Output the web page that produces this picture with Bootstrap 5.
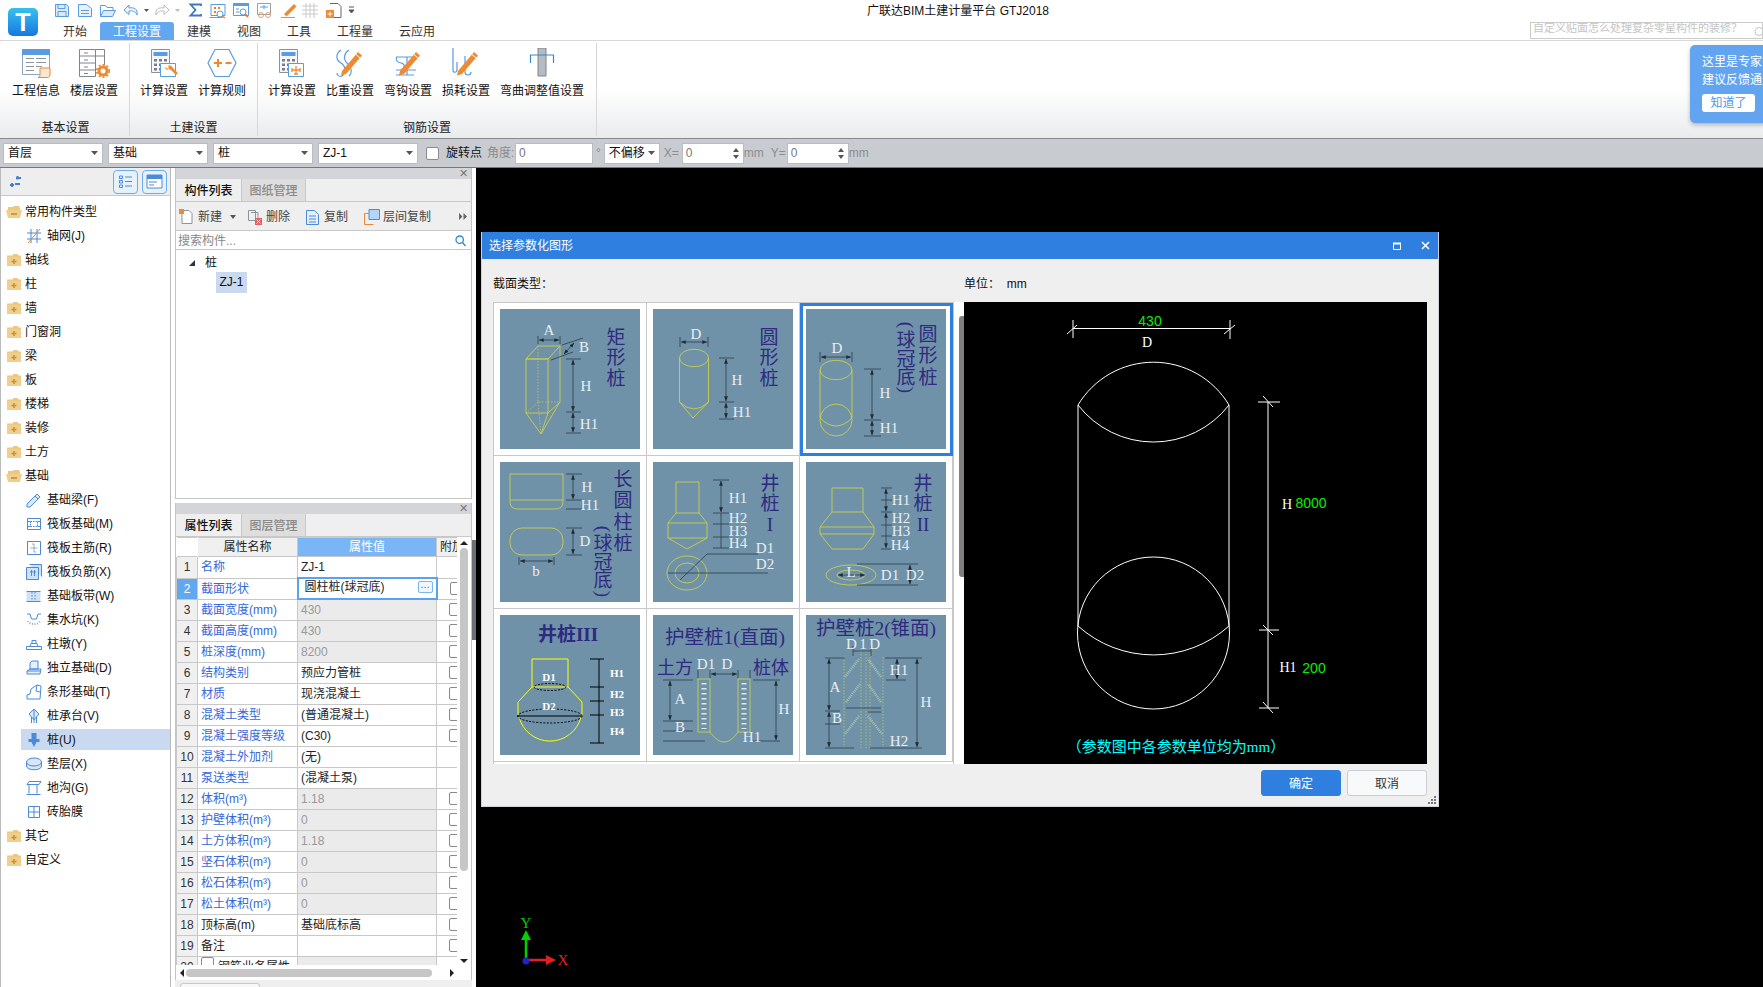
<!DOCTYPE html>
<html lang="zh-CN">
<head>
<meta charset="UTF-8">
<title>广联达BIM土建计量平台 GTJ2018</title>
<link href="https://cdn.jsdelivr.net/npm/bootstrap@5.3.0/dist/css/bootstrap.min.css" rel="stylesheet">
<style>
html, body { height: 100%; overflow: hidden; }
body { font-family: "Liberation Sans", "Noto Sans CJK SC", sans-serif; font-size: 12px; color: #111; background: #fff; line-height: 16px; }
button, input, select { font-family: inherit; }

/* top bar */
.gt-top { height: 41px; border-bottom: 1px solid #d9d9d9; }
.gt-logo { width: 45px; height: 40px; padding: 8px 0 0 8px; flex: none; }
.gt-quick { height: 22px; padding-left: 5px; }
.gt-title { margin-left: 507px; margin-top: -1px; }
.gt-tabs { padding-left: 5px; }
.gt-tab { height: 18px; line-height: 20px; padding: 0 13px; color: #333; }
.gt-tab-on { background: #63a8ee; color: #fff; border-radius: 3px 3px 0 0; }
.gt-ask { width: 233px; height: 17px; border: 1px solid #ccc; color: #c4c4c4; font-size: 11px; line-height: 11px; padding-left: 2px; overflow: hidden; white-space: nowrap; }
.gt-ask svg { right: 0; top: 4px; }
.gt-tip { top: 45px; left: 1690px; width: 123px; height: 78px; background: #62a4ef; color: #fff; border-radius: 5px; padding: 8px 12px; line-height: 18px; white-space: nowrap; box-shadow: 0 2px 4px rgba(0,0,0,.25); }
.gt-tip-btn { width: 53px; height: 18px; padding: 0; border: 0; border-radius: 3px; background: #fff; color: #4d97ea; font-size: 12px; line-height: 18px; margin-top: 5px; display: block; }

/* ribbon */
.gt-ribbon { height: 98px; border-bottom: 1px solid #8a8a8a; background: linear-gradient(#fff 0, #fff 50%, #e9ebed 100%); }
.gt-group { border-right: 1px solid #d8d8d8; margin-top: 2px; margin-bottom: 2px; padding: 5px 10px 0; }
.gt-group-a { width: 130px; padding-left: 12px; }
.gt-group-b { width: 128px; }
.gt-group-c { width: 339px; }
.gt-rrow { gap: 10px; }
.gt-rbtn { text-align: center; white-space: nowrap; }
.gt-rbtn svg { display: block; margin: 0 auto 5px; }
.gt-gname { text-align: center; margin-top: auto; color: #222; }

/* toolbar */
.gt-bar { height: 29px; background: #c8cbcf; border-bottom: 1px solid #777; padding-left: 3px; color: #8b8d90; }
.gt-sel.form-select { width: 100px; height: 21px; padding: 0 14px 0 4px; border: 1px solid #b9bcc0; border-radius: 0; font-size: 12px; line-height: 19px; color: #111; background-position: right 4px center; background-size: 7px 4px;
  background-image: url("data:image/svg+xml,%3csvg xmlns='http://www.w3.org/2000/svg' viewBox='0 0 7 4'%3e%3cpath d='M0 0h7L3.5 4z' fill='%23555'/%3e%3c/svg%3e"); }
.gt-sel-n { margin-left: 5px; }
.gt-sel-s.form-select { width: 56px; margin-left: 3px; }
.gt-check.form-check-input { width: 13px; height: 13px; margin: 0; border: 1px solid #8a8a8a; border-radius: 2px; flex: none; }
.gt-field.form-control { height: 21px; padding: 0 3px; border: 1px solid #b9bcc0; border-radius: 0; font-size: 12px; color: #777; }
.gt-w78 { width: 78px !important; }
.gt-spin { width: 62px; }
.gt-spin svg { right: 5px; top: 5px; }
.gt-lbl-on { color: #111; margin-left: 7px; width: 36px; }
.gt-lbl-a { margin-left: 5px; width: 28px; }
.gt-deg { margin-left: 3px; }
.gt-lbl-x { margin-left: 4px; width: 18px; }
.gt-lbl-y { margin-left: 5px; width: 16px; }
.gt-unit { width: 22px; }

/* workspace */
.gt-work { height: 819px; }
.gt-left { width: 171px; border-left: 1px solid #bbb; border-right: 1px solid #bbb; flex: none; }
.gt-lhead { height: 28px; background: #eee; border-bottom: 1px solid #c8c8c8; padding-right: 3px; }
.gt-lbtn { width: 25px; height: 24px; padding: 0; border: 1px solid #66aef0; border-radius: 4px; background: #e5f1fb; display: flex; align-items: center; justify-content: center; }
.gt-tree { padding-top: 4px; }
.gt-node { height: 24px; white-space: nowrap; }
.gt-node-p { padding-left: 5px; gap: 3px; }
.gt-node-c { margin-left: 20px; padding-left: 5px; gap: 5px; }
.gt-node-on { background: #c8d9f0; background-clip: padding-box; border-top: 1px solid #fff; border-bottom: 2px solid #fff; }

.gt-mid { width: 297px; margin-left: 4px; flex: none; }
.gt-pane { border: 1px solid #c4c4c4; border-top: 0; }
.gt-pane-a { height: 331px; }
.gt-pane-b { height: 477px; margin-top: 4px; background: #efefef; }
.gt-cap { height: 11px; background: #d4d5d9; color: #777; font-size: 11px; line-height: 11px; text-align: right; padding-right: 3px; }
.gt-ptabs { height: 23px; background: #efefef; border-bottom: 1px solid #c8c8c8; }
.gt-ptab { width: 65px; text-align: center; line-height: 24px; font-weight: 500; }
.gt-ptab-off { background: #dedede; color: #8a8a8a; border-left: 1px solid #c8c8c8; border-right: 1px solid #c8c8c8; }
.gt-ptool { height: 29px; background: #efefef; border-bottom: 1px solid #c8c8c8; color: #444; padding: 1px 0 0 3px; white-space: nowrap; }
.gt-m3 { margin-left: 3px; }
.gt-m5 { margin-left: 5px; }
.gt-m11 { margin-left: 11px; }
.gt-find { height: 19px; border-bottom: 1px solid #c8c8c8; padding: 2px 5px 0 2px; color: #888; background: #fff; }
.gt-ctree { padding-top: 4px; background: #fff; }
.gt-tw { padding: 0 0 0 13px; height: 17px; gap: 6px; }
.gt-zj { margin-left: 40px; width: 31px; height: 21px; line-height: 21px; text-align: center; background: #c8d9f0; margin-top: 1px; }

.gt-tblbox { height: 428px; background: #fff; }
.gt-tblclip { width: 281px; overflow: hidden; }
.gt-prop.table { --bs-table-border-color: #c8c8c8; table-layout: fixed; width: 281px; font-size: 12px; margin: 0; }
.gt-prop.table > :not(caption) > * > * { padding: 0 3px; height: 21px; line-height: 20px; white-space: nowrap; overflow: hidden; box-shadow: none; background: transparent; color: inherit; }
.gt-prop th { font-weight: 400; text-align: center; }
.gt-prop.table thead > tr > th { background: #f0f0f0; height: 18px; line-height: 18px; }
.gt-prop.table thead > tr > th:first-child { background: #fff; border-color: #fff; }
.gt-prop.table thead > tr > th.gt-hval { background: #7ab6f5; color: #fff; }
.gt-prop.table tbody > tr > td.gt-no { background: #f0f0f0; text-align: center; padding: 0; color: #333; }
.gt-prop.table tbody > tr > td.gt-no-on { background: #62a8f0; color: #fff; }
.gt-prop.table tbody > tr > td.gt-name { color: #3568d8; }
.gt-prop.table tbody > tr > td.gt-name-k { color: #222; }
.gt-prop.table tbody > tr > td.gt-off { background: #ebebeb; color: #999; }
.gt-prop.table tbody > tr > td.gt-edit { border: 2px solid #5aa2ee; padding: 0 3px 0 6px; line-height: 16px; }
.gt-edit-in { height: 16px; }
.gt-prop.table tbody > tr > td.gt-ck { padding: 3px 0 0 12px; line-height: 0; }
.gt-more { width: 15px; height: 12px; border: 1px solid #7ab6f5; border-radius: 2px; background: #eef6fe; color: #3c87da; line-height: 5px; font-size: 11px; text-align: center; }
.gt-vbar { width: 14px; background: #fff; }
.gt-vthumb { width: 8px; height: 323px; margin: 3px auto 0; background: #c6c6c6; border-radius: 4px; }
.gt-vdown { margin-top: 88px; }
.gt-hbar { height: 15px; background: #fff; padding: 0 17px 0 4px; gap: 2px; }
.gt-hthumb { width: 246px; height: 8px; background: #c6c6c6; border-radius: 4px; margin-right: auto; }
.gt-foot { height: 7px; padding: 3px 0 0 5px; background: #efefef; }
.gt-foot div { width: 80px; height: 8px; border: 1px solid #c8c8c8; border-radius: 3px 3px 0 0; background: #f8f8f8; }

.gt-canvas { background: #000; }
.gt-split { width: 4px; background: #fff; flex: none; }
.gt-handle { height: 100px; margin-top: 372px; background: #6b7075; }
.gt-axis { left: 34px; top: 747px; }

/* dialog */
.gt-dlg { left: 5px; top: 64px; width: 958px; height: 575px; background: #efefef; border: 1px solid #cfd3d8; border-top: 0; }
.gt-dtitle { height: 27px; background: #2e7fe0; color: #fff; padding: 0 8px 0 7px; gap: 20px; }
.gt-dhead { height: 43px; padding: 17px 0 0 11px; }
.gt-dhead-u { margin-left: 411px; }
.gt-dmain { height: 462px; padding: 0 11px; }
.gt-grid { width: 460px; height: 462px; overflow: hidden; border: solid #c8c8c8; border-width: 1px 0 0 1px; display: grid; grid-template-columns: repeat(3, 153px); grid-auto-rows: 153px; background: #fff; flex: none; }
.gt-cell { padding: 6px 6px 5px; border: solid #c8c8c8; border-width: 0 1px 1px 0; }
.gt-cell-on { outline: 3px solid #2e7fe0; outline-offset: -3px; }
.gt-cell svg { display: block; background: #6f92a9; }
.gt-dbar { width: 11px; background: #fff; border-left: 1px solid #c8c8c8; padding: 14px 0 0 5px; }
.gt-dthumb { width: 6px; height: 261px; background: #7f7f7f; border-radius: 3px 0 0 3px; }
.gt-view { background: #000; }
.gt-dfoot { padding: 6px 11px 0 0; gap: 6px; }
.gt-ok.btn, .gt-no-btn.btn { width: 80px; height: 26px; padding: 1px 0 0; font-size: 12px; border-radius: 3px; }
.gt-ok.btn { background: #2e7fe0; border-color: #2e7fe0; }
.gt-no-btn.btn { background: #f8f9fa; border-color: #c8ced5; color: #333; }
.gt-grip { right: 1px; bottom: 1px; }

/* svg text */
svg text { font-family: "Liberation Serif", "Noto Sans CJK SC", serif; text-anchor: middle; dominant-baseline: central; }
.gt-y { fill: none; stroke: #c9cf4a; stroke-width: .9; }
.gt-yy { fill: none; stroke: #ffff00; stroke-width: 1; }
.gt-yd { fill: none; stroke: #c9cf4a; stroke-width: .7; stroke-dasharray: 1.5 1.5; }
.gt-d { fill: none; stroke: #2d3c48; stroke-width: .8; }
.gt-a { fill: none; stroke: #2d3c48; stroke-width: .8; marker-start: url(#gt-ar); marker-end: url(#gt-ar); }
.gt-t { fill: #e9eef2; font-size: 15px; }
.gt-tb { fill: #fff; font-size: 11px; font-weight: 700; }
.gt-p { fill: #2e2a80; font-size: 19px; }
.gt-pb { fill: #2e2a80; font-size: 19px; font-weight: 700; }
.gt-ps { fill: #2e2a80; font-size: 18px; }
.gt-pt { fill: #2e2a80; font-size: 19.5px; }
.gt-vl { fill: none; stroke: #fff; stroke-width: 1; }
.gt-vg { fill: #00f000; font-family: "Liberation Sans", sans-serif; font-size: 14px; }
.gt-vw { fill: #fff; font-size: 14px; }
.gt-vc { fill: #00ffff; font-size: 15px; }
.gt-cap-t { fill: none; stroke: #a9c4b4; stroke-width: 2.5; stroke-dasharray: 1 1; }
</style>
</head>
<body>
<svg width="0" height="0" class="position-absolute">
  <defs>
    <marker id="gt-ar" viewBox="0 0 8 6" refX="7.5" refY="3" markerWidth="5" markerHeight="4" markerUnits="userSpaceOnUse" orient="auto-start-reverse"><path d="M0 0L8 3L0 6z" fill="#1e2a33"/></marker>
    <symbol id="gt-fold" viewBox="0 0 16 14"><path d="M1 4V2.500h5.500l1-1.500h4l1 1.500H15V13H1z" fill="#ecc77e"/><path d="M1 4h14v9H1z" fill="#f0cf8e"/><path d="M8 6v5M5.500 8.500h5" stroke="#c4923a" stroke-width="1.600"/></symbol>
    <symbol id="gt-open" viewBox="0 0 16 14"><path d="M2 3V2h5l1-1h5l1 2v3H2z" fill="#ecc77e"/><path d="M0 5h16l-2 8H2z" fill="#f0cf8e"/><path d="M5 9h6" stroke="#c4923a" stroke-width="1.600"/></symbol>
    <symbol id="gt-pen" viewBox="0 0 30 30"><path d="M7 23L23 4l4 3.500L11 26l-5 1.500z" fill="#ee8a32"/><path d="M21 6.500l4 3.500" stroke="#fff"/></symbol>
    <symbol id="gt-calc" viewBox="0 0 30 30"><path d="M2.500 1.500h18v23h-18z" fill="#f4f6f8" stroke="#8c9298"/><path d="M4.500 4h14v4h-14z" fill="#5b9be0"/><path d="M5 11h3v2.500H5zM10 11h3v2.500h-3zM15 11h3v2.500h-3zM5 15.500h3V18H5zM10 15.500h3V18h-3zM5 20h3v2.500H5zM10 20h3v2.500h-3z" fill="#787e85"/><path d="M11.500 15.500h15v13h-15z" fill="#fff" stroke="#5b9be0"/></symbol>
  </defs>
</svg>

<div class="gt-top d-flex">
  <div class="gt-logo">
    <svg width="30" height="28" viewBox="0 0 30 28"><defs><linearGradient id="gt-lg" x1="0" y1="0" x2="0" y2="1"><stop offset="0" stop-color="#36c0ee"/><stop offset="1" stop-color="#1878e0"/></linearGradient></defs><rect width="30" height="28" rx="5" fill="url(#gt-lg)"/><text x="15" y="14" fill="#fff" font-size="25" font-weight="700" style="font-family:'Liberation Sans',sans-serif">T</text></svg>
  </div>
  <div class="flex-grow-1 d-flex flex-column">
    <div class="gt-quick d-flex align-items-center">
      <svg class="flex-shrink-0" width="310" height="18" viewBox="50 2 310 18" fill="none" stroke="#5b9be0" stroke-width="1">
        <path d="M55.500 4.500h11l2 2v10h-13z" fill="#d9e9fa"/><path d="M58 4.500v4h7v-4M58 16.500v-5h8v5"/>
        <path d="M78.500 4.500h8l5 4v8h-13z" fill="#e9f2fc"/><path d="M81 10.500h8M81 13.500h8"/>
        <path d="M100.500 16.500v-11h5l1.500 2h6v3" /><path d="M100.500 16.500l3-6h12l-3 6z" fill="#d9e9fa"/>
        <path d="M137 15c1-6-3-8-8-7v-3l-5 5 5 4.500V11c3-.5 6 0 8 4z" fill="#eef5fc"/>
        <path d="M144 9h5l-2.500 3z" fill="#555" stroke="none"/>
        <path d="M156 15c-1-6 3-8 8-7V5l5 5-5 4.500V11c-3-.5-6 0-8 4z" stroke="#b9bcc0"/>
        <path d="M175 9h5l-2.500 3z" fill="#b9bcc0" stroke="none"/>
        <path d="M201 6V4.500h-10.500l5 5.500-5 5.500H201V14" stroke="#3e78bb" stroke-width="1.800"/>
        <path d="M211 4.500h14v11h-14z M209.500 17.500h13" /><path d="M214 7h2v2h-2zM218 7h2v2h-2zM214 11h2v2h-2z" fill="#e67d2a" stroke="none"/><circle cx="220" cy="14" r="3" fill="#fff"/><path d="M222 16l3 2" stroke="#e67d2a" stroke-width="1.500"/>
        <path d="M233.500 3.500h15v12h-15z"/><path d="M233.500 3.500h15v2h-15z" fill="#5b9be0"/><circle cx="243" cy="12" r="3" fill="#fff"/><path d="M245 14l3 3" stroke="#e67d2a" stroke-width="1.800"/><path d="M236 9h3M236 12h3" />
        <path d="M257.500 3.500h13v11h-13z" stroke="#9aa0a6"/><path d="M260 7h8M264 5v4" stroke="#5b9be0"/><circle cx="261" cy="15" r="2.500" stroke="#e6a06a"/><circle cx="268" cy="15" r="2.500" stroke="#e6a06a"/>
        <path d="M284 14l10-10 2.500 2.500-10 10z" fill="#ee8a32" stroke="none"/><path d="M281 17.500h14" stroke="#9aa0a6"/>
        <path d="M302 6h16M302 10h16M302 14h16M306 3v15M310 3v15M314 3v15" stroke="#c9c9c9"/>
        <path d="M330 3.500h8l3 3v11h-11" stroke="#5f6a75"/><path d="M326 10h8v8h-8z" fill="#ee8a32" stroke="none"/><path d="M330 11.500v5M327.500 14h5" stroke="#fff"/>
        <path d="M349 7h5M349 10h5l-2.500 3z" fill="#555" stroke="#555"/>
      </svg>
      <span class="gt-title">广联达BIM土建计量平台 GTJ2018</span>
    </div>
    <div class="d-flex gt-tabs">
      <div class="gt-tab">开始</div>
      <div class="gt-tab gt-tab-on">工程设置</div>
      <div class="gt-tab">建模</div>
      <div class="gt-tab">视图</div>
      <div class="gt-tab">工具</div>
      <div class="gt-tab">工程量</div>
      <div class="gt-tab">云应用</div>
      <div class="gt-ask ms-auto position-relative">自定义贴面怎么处理复杂零星构件的装修？
        <svg class="position-absolute" width="8" height="9" viewBox="0 0 8 9"><circle cx="5" cy="4.500" r="4" fill="none" stroke="#c4c4c4"/></svg>
      </div>
    </div>
  </div>
</div>

<div class="gt-ribbon d-flex">
  <div class="gt-group gt-group-a d-flex flex-column">
    <div class="d-flex gt-rrow">
      <div class="gt-rbtn">
        <svg width="30" height="30" viewBox="0 0 30 30"><path d="M1.500 1.500h27v25h-27z" fill="#fff" stroke="#8ea3b8"/><path d="M1 1h28v6H1z" fill="#5b9be0"/><path d="M5 10.500h8M5 14.500h8M5 18.500h8M5 22.500h8M15 10.500h10M15 14.500h10M15 18.500h6" stroke="#8c949c"/><path d="M19 20h10v7c0 2-2 2.500-3 2.500h-9c2-.5 2-2 2-3z" fill="#fbe6d0" stroke="#e58a3c"/></svg>
        工程信息
      </div>
      <div class="gt-rbtn">
        <svg width="32" height="30" viewBox="0 0 32 30"><path d="M1.500 1.500h16v27h-16z" fill="#fff" stroke="#7f868d"/><path d="M17.500 1.500h9v16M17.500 8h9" fill="none" stroke="#7f868d"/><path d="M1.500 8h16M1.500 15h16M1.500 22h16M6 5h4M6 12h4M6 19h4M6 25.500h4" stroke="#7f868d"/><circle cx="25" cy="23" r="4" fill="none" stroke="#ee8a32" stroke-width="3"/><circle cx="25" cy="23" r="6.200" fill="none" stroke="#ee8a32" stroke-width="1.800" stroke-dasharray="2 2"/></svg>
        楼层设置
      </div>
    </div>
    <div class="gt-gname">基本设置</div>
  </div>
  <div class="gt-group gt-group-b d-flex flex-column">
    <div class="d-flex gt-rrow">
      <div class="gt-rbtn">
        <svg width="30" height="30" viewBox="0 0 30 30"><use href="#gt-calc"/><path d="M15 19l3 3 2-2-1-2c2-1 4 0 5 2l5 5-2 2-5-5" fill="#ee8a32"/></svg>
        计算设置
      </div>
      <div class="gt-rbtn">
        <svg width="30" height="30" viewBox="0 0 30 30"><path d="M8 1.500h14L29 15l-7 13.500H8L1 15z" fill="#fff" stroke="#5b9be0" stroke-width="1.200"/><path d="M7 15h8M11 11v8M18.500 15h6" stroke="#ee8a32" stroke-width="2"/></svg>
        计算规则
      </div>
    </div>
    <div class="gt-gname">土建设置</div>
  </div>
  <div class="gt-group gt-group-c d-flex flex-column">
    <div class="d-flex gt-rrow">
      <div class="gt-rbtn">
        <svg width="30" height="30" viewBox="0 0 30 30"><use href="#gt-calc"/><path d="M19 18v8M15 22h8M15 20v4M23 20v4M17 26h4" stroke="#ee8a32" stroke-width="1.300" fill="none"/></svg>
        计算设置
      </div>
      <div class="gt-rbtn">
        <svg width="30" height="30" viewBox="0 0 30 30"><path d="M6 2C0 6 1 12 6 15c5 3 5 10 1 13-3 1-5-1-5-3M14 2c-5 3-6 9-2 13 4 3 6 9 2 13" fill="none" stroke="#5b9be0" stroke-width="1.200"/><use href="#gt-pen"/></svg>
        比重设置
      </div>
      <div class="gt-rbtn">
        <svg width="30" height="30" viewBox="0 0 30 30"><path d="M3 9h22M3 22h20M14 9v18M3 27h18M4 9c-2 3 0 5 4 6s5 4 0 7" fill="none" stroke="#5b9be0" stroke-width="1.200"/><use href="#gt-pen"/></svg>
        弯钩设置
      </div>
      <div class="gt-rbtn">
        <svg width="30" height="30" viewBox="0 0 30 30"><path d="M2 0v22c0 3 4 3 4 0V14M14 8v16c0 4 6 4 6 0" fill="none" stroke="#5b9be0" stroke-width="1.200"/><use href="#gt-pen"/></svg>
        损耗设置
      </div>
      <div class="gt-rbtn">
        <svg width="26" height="30" viewBox="0 0 26 30"><path d="M9 0h8v28H9z" fill="#b4bbc2" stroke="#7f868d"/><path d="M1.500 15V7h23v8" fill="none" stroke="#3e84cf" stroke-width="1.200"/></svg>
        弯曲调整值设置
      </div>
    </div>
    <div class="gt-gname">钢筋设置</div>
  </div>
</div>

<div class="gt-bar d-flex align-items-center">
  <select class="form-select gt-sel"><option>首层</option></select>
  <select class="form-select gt-sel gt-sel-n"><option>基础</option></select>
  <select class="form-select gt-sel gt-sel-n"><option>桩</option></select>
  <select class="form-select gt-sel gt-sel-n"><option>ZJ-1</option></select>
  <input type="checkbox" class="form-check-input gt-check ms-2">
  <span class="gt-lbl-on">旋转点</span>
  <span class="gt-lbl-a">角度:</span>
  <input class="form-control gt-field gt-w78" value="0">
  <span class="gt-deg">°</span>
  <select class="form-select gt-sel gt-sel-s"><option>不偏移</option></select>
  <span class="gt-lbl-x">X=</span>
  <div class="gt-spin position-relative">
    <input class="form-control gt-field" value="0">
    <svg class="position-absolute" width="6" height="11" viewBox="0 0 6 11"><path d="M0 4h6L3 0zM0 7h6l-3 4z" fill="#555"/></svg>
  </div>
  <span class="gt-unit">mm</span>
  <span class="gt-lbl-y">Y=</span>
  <div class="gt-spin position-relative">
    <input class="form-control gt-field" value="0">
    <svg class="position-absolute" width="6" height="11" viewBox="0 0 6 11"><path d="M0 4h6L3 0zM0 7h6l-3 4z" fill="#555"/></svg>
  </div>
  <span class="gt-unit">mm</span>
</div>

<div class="gt-work d-flex">
  <!-- left tree -->
  <div class="gt-left">
    <div class="gt-lhead d-flex align-items-center gap-1">
      <svg class="ms-2 me-auto" width="13" height="12" viewBox="0 0 13 12"><path d="M6 8h5M8.500 3.500V0M7 2h5M1 9h4M3 7v4" stroke="#3f82d2" stroke-width="2"/></svg>
      <button class="gt-lbtn"><svg width="15" height="15" viewBox="0 0 15 15" fill="none" stroke="#4a8ad8"><path d="M1.500 2h3v2.500h-3zM1.500 6.500h3V9h-3zM1.500 11h3v2.500h-3zM7 3h7M7 7.500h7M7 12h7"/></svg></button>
      <button class="gt-lbtn"><svg width="17" height="15" viewBox="0 0 17 15"><path d="M1 1h15v13H1z" fill="#fff" stroke="#4a8ad8"/><path d="M1 1h15v4H1z" fill="#4a8ad8"/><path d="M3 8h8M3 11h5" stroke="#4a8ad8"/></svg></button>
    </div>
    <ul class="gt-tree list-unstyled mb-0">
      <li class="gt-node gt-node-p d-flex align-items-center"><svg width="16" height="14"><use href="#gt-open"/></svg>常用构件类型</li>
      <li class="gt-node gt-node-c d-flex align-items-center"><svg width="16" height="16" viewBox="0 0 16 16" fill="none" stroke="#4a8ad8"><path d="M1 5h14M1 11h14M5 1v14M11 1v14"/><path d="M2 15L14 1" stroke="#e58a3c"/></svg>轴网(J)</li>
      <li class="gt-node gt-node-p d-flex align-items-center"><svg width="16" height="14"><use href="#gt-fold"/></svg>轴线</li>
      <li class="gt-node gt-node-p d-flex align-items-center"><svg width="16" height="14"><use href="#gt-fold"/></svg>柱</li>
      <li class="gt-node gt-node-p d-flex align-items-center"><svg width="16" height="14"><use href="#gt-fold"/></svg>墙</li>
      <li class="gt-node gt-node-p d-flex align-items-center"><svg width="16" height="14"><use href="#gt-fold"/></svg>门窗洞</li>
      <li class="gt-node gt-node-p d-flex align-items-center"><svg width="16" height="14"><use href="#gt-fold"/></svg>梁</li>
      <li class="gt-node gt-node-p d-flex align-items-center"><svg width="16" height="14"><use href="#gt-fold"/></svg>板</li>
      <li class="gt-node gt-node-p d-flex align-items-center"><svg width="16" height="14"><use href="#gt-fold"/></svg>楼梯</li>
      <li class="gt-node gt-node-p d-flex align-items-center"><svg width="16" height="14"><use href="#gt-fold"/></svg>装修</li>
      <li class="gt-node gt-node-p d-flex align-items-center"><svg width="16" height="14"><use href="#gt-fold"/></svg>土方</li>
      <li class="gt-node gt-node-p d-flex align-items-center"><svg width="16" height="14"><use href="#gt-open"/></svg>基础</li>
      <li class="gt-node gt-node-c d-flex align-items-center"><svg width="16" height="16" viewBox="0 0 16 16" fill="#d9e9fa" stroke="#4a8ad8"><path d="M1 12L11 2l3 3L4 15H1zM9 4l3 3"/></svg>基础梁(F)</li>
      <li class="gt-node gt-node-c d-flex align-items-center"><svg width="16" height="16" viewBox="0 0 16 16" fill="none" stroke="#4a8ad8"><path d="M1.500 2.500h13v11h-13z"/><path d="M4.500 5.500h7v5h-7z" stroke-dasharray="1.500 1"/><path d="M1.500 5.500h3M11.500 5.500h3M1.500 10.500h3M11.500 10.500h3"/></svg>筏板基础(M)</li>
      <li class="gt-node gt-node-c d-flex align-items-center"><svg width="16" height="16" viewBox="0 0 16 16" fill="none" stroke="#4a8ad8"><path d="M1.500 1.500h13v13h-13z"/><path d="M8 4v8M4.500 8h7M6 4h2M8 12h2" stroke="#9ab"/></svg>筏板主筋(R)</li>
      <li class="gt-node gt-node-c d-flex align-items-center"><svg width="16" height="16" viewBox="0 0 16 16" fill="#cfe2f7" stroke="#4a8ad8"><path d="M3.500 .5h12v12"/><path d="M.5 3.500h12v12H.5z"/><path d="M4 8h6M5.500 6v6M8.500 6v6" fill="none"/></svg>筏板负筋(X)</li>
      <li class="gt-node gt-node-c d-flex align-items-center"><svg width="16" height="16" viewBox="0 0 16 16" fill="#cfe2f7" stroke="#4a8ad8"><path d="M.5 3.500h14v10H.5z" stroke="none"/><path d="M.5 3.500h14M.5 13.500h14"/><path d="M6 4v9M9 4v9" stroke-dasharray="1.500 1.500"/></svg>基础板带(W)</li>
      <li class="gt-node gt-node-c d-flex align-items-center"><svg width="16" height="16" viewBox="0 0 16 16" fill="none" stroke="#4a8ad8"><path d="M1 2h3l1.500 5h5L12 2h3"/><path d="M2 9c1 4 11 4 12 0" stroke="#9ab" stroke-dasharray="1 1.500" stroke-width="2"/></svg>集水坑(K)</li>
      <li class="gt-node gt-node-c d-flex align-items-center"><svg width="16" height="16" viewBox="0 0 16 16" fill="none" stroke="#4a8ad8"><path d="M.5 10.500h15v3H.5zM4 10.500l1-3h6l1 3M6 7.500V4.500h4v3"/></svg>柱墩(Y)</li>
      <li class="gt-node gt-node-c d-flex align-items-center"><svg width="16" height="16" viewBox="0 0 16 16" fill="#e3effb" stroke="#4a8ad8"><path d="M4 9V3l2-2h6v8zM1 11l3-2h11l-1 5H1zM1 11h13"/></svg>独立基础(D)</li>
      <li class="gt-node gt-node-c d-flex align-items-center"><svg width="16" height="16" viewBox="0 0 16 16" fill="#fff" stroke="#4a8ad8"><path d="M1 15v-4l3-1 1-5 6-4 4 1-1 13zM11 1l-1 6 4 1"/></svg>条形基础(T)</li>
      <li class="gt-node gt-node-c d-flex align-items-center"><svg width="16" height="16" viewBox="0 0 16 16" fill="#d9e9fa" stroke="#4a8ad8"><path d="M8 1l5 5-5 6-5-6zM8 1v14M5.500 9v6M10.500 9v6"/></svg>桩承台(V)</li>
      <li class="gt-node gt-node-c gt-node-on d-flex align-items-center"><svg width="16" height="16" viewBox="0 0 16 16" fill="#4a8ad8"><path d="M5.500 1h5v6h3v3h-3L8 15l-2.500-5h-3V7h3z"/></svg>桩(U)</li>
      <li class="gt-node gt-node-c d-flex align-items-center"><svg width="16" height="16" viewBox="0 0 16 16" fill="#d9e6f5" stroke="#4a8ad8"><path d="M.5 6v4c0 5 15 5 15 0V6z"/><ellipse cx="8" cy="6" rx="7.500" ry="4"/></svg>垫层(X)</li>
      <li class="gt-node gt-node-c d-flex align-items-center"><svg width="16" height="16" viewBox="0 0 16 16" fill="none" stroke="#4a8ad8"><path d="M3 1.500h12l-2 3H1zM1 4.500h12M3 4.500v9M11 4.500v9M.5 14.500h14"/></svg>地沟(G)</li>
      <li class="gt-node gt-node-c d-flex align-items-center"><svg width="16" height="16" viewBox="0 0 16 16" fill="none" stroke="#4a8ad8"><path d="M2.500 2.500h11v11h-11zM8 2.500v11M2.500 8h11"/></svg>砖胎膜</li>
      <li class="gt-node gt-node-p d-flex align-items-center"><svg width="16" height="14"><use href="#gt-fold"/></svg>其它</li>
      <li class="gt-node gt-node-p d-flex align-items-center"><svg width="16" height="14"><use href="#gt-fold"/></svg>自定义</li>
    </ul>
  </div>

  <!-- middle panes -->
  <div class="gt-mid">
    <div class="gt-pane gt-pane-a">
      <div class="gt-cap">✕</div>
      <div class="gt-ptabs d-flex">
        <div class="gt-ptab">构件列表</div>
        <div class="gt-ptab gt-ptab-off">图纸管理</div>
      </div>
      <div class="gt-ptool d-flex align-items-center">
        <svg width="15" height="16" viewBox="0 0 15 16" fill="none" stroke="#8c949c"><path d="M3 1.500h7l3 3v10H3z" fill="#fff"/><path d="M0 0h5v5H0z" fill="#ee8a32" stroke="none"/></svg>
        <span class="ms-1">新建</span>
        <svg class="ms-2" width="6" height="4" viewBox="0 0 6 4"><path d="M0 0h6L3 4z" fill="#555"/></svg>
        <svg class="gt-m11" width="15" height="16" viewBox="0 0 15 16" fill="none" stroke="#8c949c"><path d="M1.500 1.500h7v10h-7zM4 3.500h7v10"/><path d="M8 9h7v7H8z" fill="#e26060" stroke="none"/><path d="M9.500 10.500l4 4M13.500 10.500l-4 4" stroke="#fff"/></svg>
        <span class="ms-1">删除</span>
        <svg class="ms-3" width="13" height="16" viewBox="0 0 13 16" fill="#e3effb" stroke="#4a8ad8"><path d="M.5 1.500h8l4 4v10H.5z"/><path d="M3 7h7M3 10h7M3 13h7" fill="none"/></svg>
        <span class="gt-m5">复制</span>
        <svg class="ms-3" width="16" height="16" viewBox="0 0 16 16"><path d="M.5 15.500v-11h4M.5 15.500h9" fill="none" stroke="#e58a3c"/><path d="M5 .5h10.500v10H5z" fill="#b5d5f7" stroke="#4a8ad8"/></svg>
        <span class="gt-m3">层间复制</span>
        <svg class="ms-auto me-1" width="8" height="7" viewBox="0 0 8 7"><path d="M0 0l3.500 3.500L0 7zM4.500 0L8 3.500 4.500 7z" fill="#666"/></svg>
      </div>
      <div class="gt-find d-flex align-items-center justify-content-between">
        <span>搜索构件...</span>
        <svg width="11" height="12" viewBox="0 0 11 12" fill="none" stroke="#2f88c8" stroke-width="1.300"><circle cx="4.700" cy="4.700" r="3.700"/><path d="M7.500 7.500l3 3.500"/></svg>
      </div>
      <div class="gt-ctree">
        <div class="gt-tw d-flex align-items-center"><svg width="6" height="6" viewBox="0 0 6 6"><path d="M6 0v6H0z" fill="#333"/></svg><span class="ms-1">桩</span></div>
        <div class="gt-zj">ZJ-1</div>
      </div>
    </div>

    <div class="gt-pane gt-pane-b">
      <div class="gt-cap">✕</div>
      <div class="gt-ptabs d-flex">
        <div class="gt-ptab">属性列表</div>
        <div class="gt-ptab gt-ptab-off">图层管理</div>
      </div>
      <div class="gt-tblbox d-flex">
        <div class="gt-tblclip">
          <table class="table table-bordered gt-prop">
            <colgroup><col style="width:21px"><col style="width:100px"><col style="width:139px"><col style="width:21px"></colgroup>
            <thead><tr><th></th><th>属性名称</th><th class="gt-hval">属性值</th><th>附加</th></tr></thead>
            <tbody>
              <tr><td class="gt-no">1</td><td class="gt-name">名称</td><td>ZJ-1</td><td></td></tr>
              <tr><td class="gt-no gt-no-on">2</td><td class="gt-name">截面形状</td><td class="gt-edit"><div class="gt-edit-in d-flex align-items-center justify-content-between">圆柱桩(球冠底)<div class="gt-more">...</div></div></td><td class="gt-ck"><input type="checkbox" class="form-check-input gt-check"></td></tr>
              <tr><td class="gt-no">3</td><td class="gt-name">截面宽度(mm)</td><td class="gt-off">430</td><td class="gt-ck"><input type="checkbox" class="form-check-input gt-check"></td></tr>
              <tr><td class="gt-no">4</td><td class="gt-name">截面高度(mm)</td><td class="gt-off">430</td><td class="gt-ck"><input type="checkbox" class="form-check-input gt-check"></td></tr>
              <tr><td class="gt-no">5</td><td class="gt-name">桩深度(mm)</td><td class="gt-off">8200</td><td class="gt-ck"><input type="checkbox" class="form-check-input gt-check"></td></tr>
              <tr><td class="gt-no">6</td><td class="gt-name">结构类别</td><td>预应力管桩</td><td class="gt-ck"><input type="checkbox" class="form-check-input gt-check"></td></tr>
              <tr><td class="gt-no">7</td><td class="gt-name">材质</td><td>现浇混凝土</td><td class="gt-ck"><input type="checkbox" class="form-check-input gt-check"></td></tr>
              <tr><td class="gt-no">8</td><td class="gt-name">混凝土类型</td><td>(普通混凝土)</td><td class="gt-ck"><input type="checkbox" class="form-check-input gt-check"></td></tr>
              <tr><td class="gt-no">9</td><td class="gt-name">混凝土强度等级</td><td>(C30)</td><td class="gt-ck"><input type="checkbox" class="form-check-input gt-check"></td></tr>
              <tr><td class="gt-no">10</td><td class="gt-name">混凝土外加剂</td><td>(无)</td><td></td></tr>
              <tr><td class="gt-no">11</td><td class="gt-name">泵送类型</td><td>(混凝土泵)</td><td></td></tr>
              <tr><td class="gt-no">12</td><td class="gt-name">体积(m³)</td><td class="gt-off">1.18</td><td class="gt-ck"><input type="checkbox" class="form-check-input gt-check"></td></tr>
              <tr><td class="gt-no">13</td><td class="gt-name">护壁体积(m³)</td><td class="gt-off">0</td><td class="gt-ck"><input type="checkbox" class="form-check-input gt-check"></td></tr>
              <tr><td class="gt-no">14</td><td class="gt-name">土方体积(m³)</td><td class="gt-off">1.18</td><td class="gt-ck"><input type="checkbox" class="form-check-input gt-check"></td></tr>
              <tr><td class="gt-no">15</td><td class="gt-name">坚石体积(m³)</td><td class="gt-off">0</td><td class="gt-ck"><input type="checkbox" class="form-check-input gt-check"></td></tr>
              <tr><td class="gt-no">16</td><td class="gt-name">松石体积(m³)</td><td class="gt-off">0</td><td class="gt-ck"><input type="checkbox" class="form-check-input gt-check"></td></tr>
              <tr><td class="gt-no">17</td><td class="gt-name">松土体积(m³)</td><td class="gt-off">0</td><td class="gt-ck"><input type="checkbox" class="form-check-input gt-check"></td></tr>
              <tr><td class="gt-no">18</td><td class="gt-name gt-name-k">顶标高(m)</td><td>基础底标高</td><td class="gt-ck"><input type="checkbox" class="form-check-input gt-check"></td></tr>
              <tr><td class="gt-no">19</td><td class="gt-name gt-name-k">备注</td><td></td><td class="gt-ck"><input type="checkbox" class="form-check-input gt-check"></td></tr>
              <tr><td class="gt-no">20</td><td class="gt-name gt-name-k"><input type="checkbox" class="form-check-input gt-check me-1">钢筋业务属性</td><td class="gt-off"></td><td></td></tr>
            </tbody>
          </table>
        </div>
        <div class="gt-vbar">
          <svg class="d-block mx-auto mt-1" width="8" height="4" viewBox="0 0 8 4"><path d="M0 4h8L4 0z" fill="#222"/></svg>
          <div class="gt-vthumb"></div>
          <svg class="d-block mx-auto gt-vdown" width="8" height="4" viewBox="0 0 8 4"><path d="M0 0h8L4 4z" fill="#222"/></svg>
        </div>
      </div>
      <div class="gt-hbar d-flex align-items-center">
        <svg width="4" height="8" viewBox="0 0 4 8"><path d="M4 0v8L0 4z" fill="#222"/></svg>
        <div class="gt-hthumb"></div>
        <svg width="4" height="8" viewBox="0 0 4 8"><path d="M0 0v8l4-4z" fill="#222"/></svg>
      </div>
    </div>
    <div class="gt-foot"><div></div></div>
  </div>

  <div class="gt-split"><div class="gt-handle"></div></div>

  <!-- drawing canvas -->
  <div class="gt-canvas flex-grow-1 position-relative">
    <svg class="gt-axis position-absolute" width="70" height="55" viewBox="510 915 70 55">
      <path d="M526 960V938" stroke="#00d000" stroke-width="2.500"/><path d="M521 940h10l-5-10z" fill="#00d000"/>
      <path d="M526 960h22" stroke="#e02020" stroke-width="2.500"/><path d="M546 955l10 5-10 5z" fill="#e02020"/>
      <circle cx="526" cy="961" r="3.500" fill="#2222c8"/>
      <text x="526" y="923" fill="#00d000" font-size="15">Y</text>
      <text x="563" y="960" fill="#e02020" font-size="15">X</text>
    </svg>

    <div class="gt-dlg position-absolute d-flex flex-column">
      <div class="gt-dtitle d-flex align-items-center">
        <span class="me-auto">选择参数化图形</span>
        <svg width="8" height="8" viewBox="0 0 8 8" fill="none" stroke="#fff"><path d="M.5 1.500h7v6h-7z"/><path d="M0 1.500h8" stroke-width="2"/></svg>
        <svg width="9" height="9" viewBox="0 0 9 9" stroke="#fff" stroke-width="1.500"><path d="M1 1l7 7M8 1L1 8"/></svg>
      </div>
      <div class="gt-dhead d-flex">
        <span>截面类型：</span>
        <span class="gt-dhead-u">单位：&nbsp; mm</span>
      </div>
      <div class="gt-dmain d-flex">
        <div class="gt-grid">
          <div class="gt-cell">
            <svg width="140" height="140" viewBox="0 0 140 140">
              <path class="gt-y" d="M26 50L38 37H60L48 50zM26 50H48V104H26zM60 37V93L48 104M26 104L41 125L48 104M60 93L41 125"/>
              <path class="gt-yd" d="M38 37V93H60M38 93L26 104M38 93L41 125"/>
              <path class="gt-a" d="M39 31H59"/><path class="gt-d" d="M38 27V35M60 27V35M62 36L83 29M51 51L73 43"/><path class="gt-a" d="M64 45L74 34"/>
              <path class="gt-d" d="M66 50H81M66 103H81M66 124H81"/><path class="gt-a" d="M73 51V102"/><path class="gt-a" d="M73 104V123"/>
              <text class="gt-t" x="49" y="21">A</text><text class="gt-t" x="84" y="38">B</text><text class="gt-t" x="86" y="77">H</text><text class="gt-t" x="89" y="115">H1</text>
              <text class="gt-p" x="116" y="28">矩</text><text class="gt-p" x="116" y="48">形</text><text class="gt-p" x="116" y="69">桩</text>
            </svg>
          </div>
          <div class="gt-cell">
            <svg width="140" height="140" viewBox="0 0 140 140">
              <ellipse class="gt-y" cx="41" cy="49" rx="14.500" ry="8.700"/><path class="gt-y" d="M26.500 49V93L40 109L55.500 93V49M26.500 93Q41 107 55.500 93"/>
              <path class="gt-a" d="M28 33H54"/><path class="gt-d" d="M27 28V38M55 28V38M66 49H81M66 93H81M66 110H81"/><path class="gt-a" d="M73 50V92"/><path class="gt-a" d="M73 94V109"/>
              <text class="gt-t" x="43" y="25">D</text><text class="gt-t" x="84" y="71">H</text><text class="gt-t" x="89" y="103">H1</text>
              <text class="gt-p" x="116" y="28">圆</text><text class="gt-p" x="116" y="48">形</text><text class="gt-p" x="116" y="69">桩</text>
            </svg>
          </div>
          <div class="gt-cell gt-cell-on">
            <svg width="140" height="140" viewBox="0 0 140 140">
              <ellipse class="gt-y" cx="30" cy="61" rx="16" ry="9.700"/><path class="gt-y" d="M14 61V109Q30 125 46 109V61"/><path class="gt-y" d="M14 111A16 16 0 0 1 46 111A16 16 0 0 1 14 111"/>
              <path class="gt-a" d="M15 48H45"/><path class="gt-d" d="M14 43V53M46 43V53M58 60H75M58 111H75M58 127H75"/><path class="gt-a" d="M66 61V110"/><path class="gt-a" d="M66 112V126"/>
              <text class="gt-t" x="31" y="39">D</text><text class="gt-t" x="79" y="84">H</text><text class="gt-t" x="83" y="119">H1</text>
              <text class="gt-p" x="122" y="25">圆</text><text class="gt-p" x="122" y="46">形</text><text class="gt-p" x="122" y="68">桩</text>
              <text class="gt-p" transform="rotate(90 100 16)" x="100" y="16">(</text><text class="gt-p" x="100" y="31">球</text><text class="gt-p" x="100" y="50">冠</text><text class="gt-p" x="100" y="68">底</text><text class="gt-p" transform="rotate(90 100 81)" x="100" y="81">)</text>
            </svg>
          </div>
          <div class="gt-cell">
            <svg width="140" height="140" viewBox="0 0 140 140">
              <path class="gt-y" d="M10 12H63V40Q63 47 55 47H18Q10 47 10 40zM10 38H63"/><rect class="gt-y" x="10" y="66" width="53" height="27" rx="12"/>
              <path class="gt-d" d="M66 12H82M66 38H82M66 47H82M66 66H82M66 93H82M19 95V103M54 95V103"/><path class="gt-a" d="M73 13V37"/><path class="gt-a" d="M73 67V92"/><path class="gt-a" d="M20 99H53"/>
              <text class="gt-t" x="87" y="25">H</text><text class="gt-t" x="90" y="43">H1</text><text class="gt-t" x="85" y="79">D</text><text class="gt-t" x="36" y="109">b</text>
              <text class="gt-p" x="123" y="17">长</text><text class="gt-p" x="123" y="38">圆</text><text class="gt-p" x="123" y="60">柱</text><text class="gt-p" x="123" y="81">桩</text>
              <text class="gt-p" transform="rotate(90 103 67)" x="103" y="67">(</text><text class="gt-p" x="103" y="81">球</text><text class="gt-p" x="103" y="100">冠</text><text class="gt-p" x="103" y="118">底</text><text class="gt-p" transform="rotate(90 103 132)" x="103" y="132">)</text>
            </svg>
          </div>
          <div class="gt-cell">
            <svg width="140" height="140" viewBox="0 0 140 140">
              <path class="gt-y" d="M23 20H46V51H23zM23 51L15 61H54L46 51M15 61V76H54V61M15 76L34 87L54 76"/>
              <ellipse class="gt-y" cx="34" cy="111" rx="20" ry="17"/><ellipse class="gt-y" cx="34" cy="111" rx="12" ry="10"/>
              <path class="gt-d" d="M27 118L54 92H105M15 111H115M60 18H76M60 51H76M60 62H76M60 75H76M60 86H76"/><path class="gt-a" d="M68 19V50"/><path class="gt-d" d="M68 51V86"/>
              <text class="gt-t" x="85" y="36">H1</text><text class="gt-t" x="85" y="56">H2</text><text class="gt-t" x="85" y="69">H3</text><text class="gt-t" x="85" y="81">H4</text><text class="gt-t" x="112" y="86">D1</text><text class="gt-t" x="112" y="102">D2</text>
              <text class="gt-p" x="117" y="21">井</text><text class="gt-p" x="117" y="41">桩</text><text class="gt-p" x="117" y="62">I</text>
            </svg>
          </div>
          <div class="gt-cell">
            <svg width="140" height="140" viewBox="0 0 140 140">
              <path class="gt-y" d="M26 26H57V50H26zM26 50L14 65H68L57 50M14 65V72H68V65M14 72L26 87H57L68 72"/>
              <ellipse class="gt-y" cx="45" cy="113" rx="25" ry="10"/><ellipse class="gt-y" cx="45" cy="113" rx="14" ry="5"/>
              <path class="gt-d" d="M51 102H112M51 123H112M75 26H86M75 38H86M75 50H86M75 63H86M75 74H86M75 87H86"/><path class="gt-a" d="M80 27V49"/><path class="gt-a" d="M80 51V86"/><path class="gt-a" d="M32 113H59"/><path class="gt-a" d="M104 103V122"/>
              <text class="gt-t" x="45" y="110">L</text><text class="gt-t" x="95" y="38">H1</text><text class="gt-t" x="95" y="56">H2</text><text class="gt-t" x="95" y="69">H3</text><text class="gt-t" x="94" y="83">H4</text><text class="gt-t" x="84" y="113">D1</text><text class="gt-t" x="109" y="113">D2</text>
              <text class="gt-p" x="117" y="21">井</text><text class="gt-p" x="117" y="41">桩</text><text class="gt-p" x="117" y="62">II</text>
            </svg>
          </div>
          <div class="gt-cell">
            <svg width="140" height="140" viewBox="0 0 140 140">
              <path class="gt-yy" d="M32 44H68V72H32zM32 72L18 87V100M68 72L82 87V100M19 102A32 32 0 0 0 81 102"/>
              <ellipse cx="50" cy="72" rx="16" ry="3.500" fill="none" stroke="#000" stroke-width="1" stroke-dasharray="2 1.500"/>
              <ellipse cx="50" cy="101" rx="32" ry="7" fill="none" stroke="#000" stroke-width="1" stroke-dasharray="2 1.500"/>
              <path d="M17 101H81M99 44V128M90 44H104M90 72H104M90 86H104M90 100H104M90 128H104" stroke="#000" fill="none"/>
              <text class="gt-tb" x="49" y="62">D1</text><text class="gt-tb" x="49" y="91">D2</text><text class="gt-tb" x="117" y="58">H1</text><text class="gt-tb" x="117" y="79">H2</text><text class="gt-tb" x="117" y="97">H3</text><text class="gt-tb" x="117" y="116">H4</text>
              <text class="gt-pb" x="68" y="19">井桩III</text>
            </svg>
          </div>
          <div class="gt-cell">
            <svg width="140" height="140" viewBox="0 0 140 140">
              <path class="gt-y" d="M45 64H57V117H45zM85 64H97V117H85zM57 117Q71 137 85 117"/>
              <path d="M51 68V114" fill="none" stroke="#dfe9d8" stroke-width="5" stroke-dasharray="1.500 3.500"/><path d="M91 68V114" fill="none" stroke="#dfe9d8" stroke-width="5" stroke-dasharray="1.500 3.500"/>
              <path class="gt-d" d="M10 65H40M10 106H40M10 116H40M10 126H52M100 65H127M100 126H127M45 55V63M57 55V63M85 55V63M97 55V63"/><path class="gt-a" d="M17 66V105"/><path class="gt-a" d="M123 66V125"/><path class="gt-a" d="M58 59H84"/>
              <text class="gt-t" x="27" y="84">A</text><text class="gt-t" x="27" y="112">B</text><text class="gt-t" x="131" y="94">H</text><text class="gt-t" x="99" y="122">H1</text><text class="gt-t" x="53" y="49">D1</text><text class="gt-t" x="74" y="49">D</text>
              <text class="gt-pt" x="72" y="22">护壁桩1(直面)</text><text class="gt-ps" x="22" y="53">土方</text><text class="gt-ps" x="118" y="53">桩体</text>
            </svg>
          </div>
          <div class="gt-cell">
            <svg width="140" height="140" viewBox="0 0 140 140">
              <path class="gt-yd" d="M38 42V133M55 36V133M60 36V133M64 36V133M77 42V133"/>
              <path class="gt-cap-t" d="M39 62L53 44M40 87L54 69M39 119L53 101M75 62L62 44M75 87L62 69M76 119L62 101"/>
              <path class="gt-d" d="M19 43H39M19 133H48M19 96H34M19 109H34M79 43H116M64 133H116M40 93H75M62 97H75M47 36H65M47 31V41M65 31V41M80 65H100"/><path class="gt-a" d="M23 44V95"/><path class="gt-a" d="M23 97V132"/><path class="gt-a" d="M111 44V132"/><path class="gt-a" d="M91 44V64"/>
              <text class="gt-t" x="29" y="72">A</text><text class="gt-t" x="31" y="103">B</text><text class="gt-t" x="120" y="87">H</text><text class="gt-t" x="93" y="55">H1</text><text class="gt-t" x="93" y="126">H2</text><text class="gt-t" x="57" y="29" textLength="34">D1D</text>
              <text class="gt-pt" x="70" y="13">护壁桩2(锥面)</text>
            </svg>
          </div>
        </div>
        <div class="gt-dbar"><div class="gt-dthumb"></div></div>
        <div class="gt-view flex-grow-1">
          <svg class="d-block" width="463" height="462" viewBox="964 302 463 462">
            <path class="gt-vl" d="M1073 328.500H1230M1073 320V338M1230 320V339M1067 334L1077 325M1224 334L1235 325"/>
            <path class="gt-vl" d="M1078 405V626M1229 405V626"/>
            <path class="gt-vl" d="M1078 405A88 88 0 0 1 1229 405A95.500 95.500 0 0 1 1078 405"/>
            <path class="gt-vl" d="M1078 626A113 113 0 0 0 1229 626"/>
            <circle class="gt-vl" cx="1153.500" cy="633" r="76"/>
            <path class="gt-vl" d="M1268 402V708M1258 402H1280M1259 630H1279M1259 708H1279M1263 396L1273 407M1263 625L1273 635M1263 702L1273 713"/>
            <text class="gt-vg" x="1150" y="321">430</text>
            <text class="gt-vw" x="1147" y="342" fill="#cfe6ff">D</text>
            <text class="gt-vw" x="1287" y="504">H</text>
            <text class="gt-vg" x="1311" y="503">8000</text>
            <text class="gt-vw" x="1288" y="667">H1</text>
            <text class="gt-vg" x="1314" y="668">200</text>
            <text class="gt-vc" x="1176" y="747">（参数图中各参数单位均为mm）</text>
          </svg>
        </div>
      </div>
      <div class="gt-dfoot d-flex justify-content-end">
        <button class="btn btn-primary gt-ok">确定</button>
        <button class="btn btn-light gt-no-btn">取消</button>
      </div>
      <svg class="gt-grip position-absolute" width="9" height="9" viewBox="0 0 9 9" fill="#777"><path d="M6 0h2v2H6zM3 3h2v2H3zM6 3h2v2H6zM0 6h2v2H0zM3 6h2v2H3zM6 6h2v2H6z"/></svg>
    </div>
  </div>
</div>

<div class="gt-tip position-absolute">
  这里是专家答疑<br>建议反馈通道
  <button class="gt-tip-btn">知道了</button>
</div>

<script src="https://cdn.jsdelivr.net/npm/bootstrap@5.3.0/dist/js/bootstrap.bundle.min.js"></script>
</body>
</html>
